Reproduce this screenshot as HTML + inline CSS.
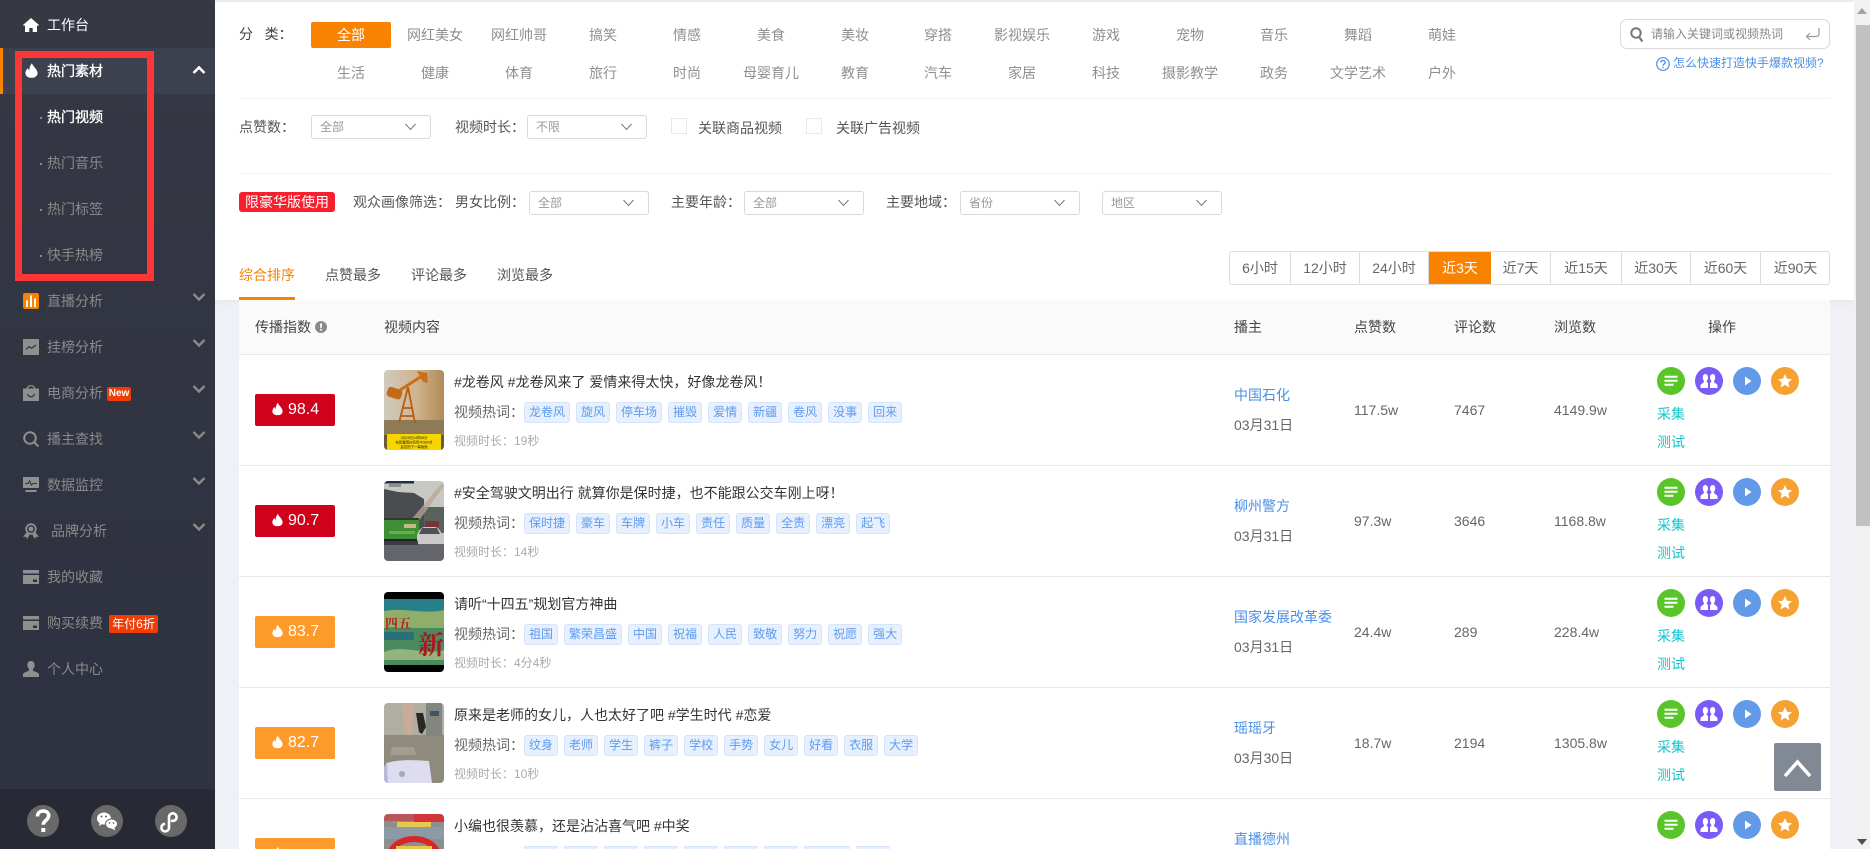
<!DOCTYPE html>
<html lang="zh-CN">
<head>
<meta charset="utf-8">
<title>热门视频</title>
<style>
*{box-sizing:border-box;margin:0;padding:0}
html,body{width:1870px;height:849px;overflow:hidden;background:#eff1f6}
body{position:relative;font:14px/20px "Liberation Sans","Noto Sans CJK SC",sans-serif;color:#666}
.a,.a>*,.r>*{position:absolute}
.t{position:absolute;white-space:nowrap;line-height:20px}
#side{position:absolute;left:0;top:0;width:215px;height:849px;background:linear-gradient(#363844,#2f3240 70%);overflow:hidden}
#side .m{position:absolute;left:0;width:215px;height:46px;color:#8a8a8a}
#side .m span.l{position:absolute;left:47px;top:13px;line-height:20px;white-space:nowrap}
#side .m span.bd{-webkit-text-stroke:.35px #fff}
#side .m svg.i{position:absolute;left:23px;top:15px;width:16px;height:16px}
#side .m svg.c{position:absolute;left:192px;top:14px;width:14px;height:10px}
#side .s span.l:before{content:"";position:absolute;left:-7px;top:10px;width:2px;height:2px;background:#8a8a8a;-webkit-text-stroke:0}
#rb{position:absolute;left:15px;top:51px;width:139px;height:230px;border:7px solid #ff3636}
#foot{position:absolute;left:0;top:789px;width:215px;height:60px;background:#272a35}
#foot div{position:absolute;top:16px;width:32px;height:32px;border-radius:50%;background:#696969}
#foot svg{position:absolute;left:0;top:0;width:32px;height:32px}
#top{position:absolute;left:215px;top:2px;width:1639px;height:298px;background:#fff;box-shadow:0 3px 5px rgba(0,0,0,.04),0 -2px 3px rgba(0,0,0,.04)}
.cat{position:absolute;width:80px;text-align:center;color:#8f8f8f;line-height:20px;white-space:nowrap}
.hr{position:absolute;left:239px;width:1591px;height:1px;background:#f2f2f2}
.sel{position:absolute;width:120px;height:24px;border:1px solid #d9d9d9;border-radius:3px;color:#999;font-size:12px;line-height:23px;padding-left:8px;background:#fff}
.sel svg{position:absolute;right:14px;top:7px;width:11px;height:8px}
.cb{position:absolute;width:16px;height:16px;border:1px solid #e8e8e8;background:#fff}
.lb{color:#555}
#hd{position:absolute;left:239px;top:300px;width:1591px;height:55px;background:#fafafa;border-bottom:1px solid #e8e8e8;color:#444}
.r{position:absolute;left:239px;width:1591px;height:111px;background:#fff;border-bottom:1px solid #e8e8e8}
.b{width:80px;height:32px;left:16px;top:39px;border-radius:2px;color:#fff;font-size:16px;line-height:32px;padding-left:33px}
.b svg{position:absolute;left:17px;top:8px;width:11px;height:14px}
.red{background:#d0021b}.or{background:#fe9a29}
.th{left:145px;top:15px;width:60px;height:80px;border-radius:4px;overflow:hidden}
.th svg{display:block;width:60px;height:80px;filter:blur(.35px)}
.tt{left:215px;top:17px;color:#333;white-space:nowrap;line-height:20px}
.hw{left:215px;top:47px;white-space:nowrap;line-height:20px;color:#666}
.tg{left:285px;top:47px;height:21px;white-space:nowrap;display:flex;gap:6px}
.tg i{font-style:normal;display:block;height:21px;line-height:19px;padding:0 4px;font-size:12px;color:#5f9bee;background:#e6f0ff;border:1px solid #d6e4fb;border-radius:3px}
.du{left:215px;top:76px;font-size:12px;color:#aaa;white-space:nowrap;line-height:20px}
.au{left:995px;top:30px;color:#4a8fe7;white-space:nowrap;line-height:20px}
.da{left:995px;top:60px;color:#666;white-space:nowrap;line-height:20px}
.n{top:45px;color:#666;line-height:20px;white-space:nowrap}
.o{top:12px;width:28px;height:28px;border-radius:50%}
.o svg{position:absolute;left:0;top:0;width:28px;height:28px}
.q{left:1418px;color:#14c4cc;line-height:20px;white-space:nowrap}
#time{position:absolute;left:1229px;top:251px;width:601px;height:34px;border:1px solid #ddd;border-radius:3px;background:#fff;overflow:hidden}
#time b{position:absolute;top:0;height:32px;font-weight:400;line-height:32px;text-align:center;color:#666;border-right:1px solid #ddd}
#time b.on{background:#f98300;color:#fff;border-right:0;height:32px;top:0;line-height:32px}
#st{position:absolute;left:1774px;top:743px;width:47px;height:48px;background:#818a94;border-radius:2px}
#sb{position:absolute;left:1854px;top:0;width:16px;height:849px;background:#f1f1f1}
#sb div{position:absolute;left:2px;top:25px;width:14px;height:501px;background:#c1c1c1}
</style>
</head>
<body>
<svg width="0" height="0" style="position:absolute">
<defs>
<symbol id="fl" viewBox="0 0 14 16"><path fill="#fff" d="M7.500 0C8 3 12.500 5.500 13.500 10C14 13.500 11 16 7 16C3 16 0 13.500.5 10C.9 8 2 6.500 3.200 5.500C3.400 6.800 3.900 7.500 4.800 8C4.500 5 5.800 2 7.500 0z"/></symbol>
<symbol id="a1" viewBox="0 0 28 28"><circle cx="14" cy="14" r="14" fill="#5ac529"/><path fill="#fff" d="M7.500 8.800h13v2h-13zM7.500 12.800h13v2h-13zM7.500 16.800h9v2h-9z"/></symbol>
<symbol id="a2" viewBox="0 0 28 28"><circle cx="14" cy="14" r="14" fill="#7b5bf7"/><path fill="#fff" d="M10 7c1.900 0 3 1.600 3 3.500 0 1.400-.6 2.700-1.400 3.500-.2 1 .6 1.500 1.400 1.900V21H5.500v-2.500c0-1.600 2.900-2.200 3.700-4.300-.9-.8-1.400-2.200-1.400-3.700C7.800 8.600 8.700 7 10 7zM18 7c1.300 0 2.200 1.600 2.200 3.500 0 1.500-.5 2.900-1.400 3.700.8 2.100 3.700 2.700 3.700 4.300V21H15v-5.100c.8-.4 1.600-.9 1.400-1.900-.8-.8-1.400-2.100-1.400-3.500C15 8.600 16.100 7 18 7z"/></symbol>
<symbol id="a3" viewBox="0 0 28 28"><circle cx="14" cy="14" r="14" fill="#639ae8"/><path fill="#fff" d="M12 9.500l6.500 4.500-6.500 4.500z"/></symbol>
<symbol id="a4" viewBox="0 0 28 28"><circle cx="14" cy="14" r="14" fill="#f5a232"/><path fill="#fff" d="M14 7l2.100 4.700 5 .5-3.800 3.300 1.100 5-4.400-2.600-4.400 2.600 1.100-5-3.800-3.300 5-.5z"/></symbol>
<symbol id="dn" viewBox="0 0 14 10"><path fill="none" stroke="#8a8a8a" stroke-width="2.400" d="M1.500 2L7 7.500 12.500 2"/></symbol>
<symbol id="sd" viewBox="0 0 11 8"><path fill="none" stroke="#777" stroke-width="1" d="M.5 1L5.500 6.500 10.500 1"/></symbol>
<symbol id="card" viewBox="0 0 16 16"><path fill="#8f8f8f" d="M0 1h16v3.500H0zM0 6h16v9H0z"/><path fill="#2f3240" d="M10 10.500h4V13h-4z"/></symbol>
</defs>
</svg>

<div id="side">
  <div class="m" style="top:2px;color:#fff"><svg class="i" viewBox="0 0 16 16"><path fill="#fff" d="M8 1l8 7-1 1-1-.8V15H9.700v-4H6.300v4H2V8.200L1 9 0 8z"/></svg><span class="l">工作台</span></div>
  <div class="m" style="top:48px;background:#3d404d;color:#fff"><div style="position:absolute;left:0;top:0;width:3px;height:46px;background:#f98300"></div><svg class="i" viewBox="0 0 14 16" style="left:25px;width:13px;height:15px"><use href="#fl"/></svg><span class="l bd">热门素材</span><svg class="c" viewBox="0 0 14 10" style="top:17px"><path fill="none" stroke="#fff" stroke-width="2.600" d="M1.500 8L7 2.500 12.500 8"/></svg></div>
  <div class="m s" style="top:94px;color:#fff"><span class="l bd">热门视频</span></div>
  <div class="m s" style="top:140px"><span class="l">热门音乐</span></div>
  <div class="m s" style="top:186px"><span class="l">热门标签</span></div>
  <div class="m s" style="top:232px"><span class="l">快手热榜</span></div>
  <div class="m" style="top:278px"><svg class="i" viewBox="0 0 16 16"><rect width="16" height="16" rx="2" fill="#f98300"/><path fill="#fff" d="M3 7.500h2V14H3zM7 2.500h2V14H7zM11 5.500h2V14h-2z"/></svg><span class="l">直播分析</span><svg class="c" viewBox="0 0 14 10"><use href="#dn"/></svg></div>
  <div class="m" style="top:324px"><svg class="i" viewBox="0 0 16 16"><rect width="16" height="16" fill="#8f8f8f"/><path fill="none" stroke="#2f3240" stroke-width="1.200" d="M3 10.500l3-3 2.500 1.800L13 6"/></svg><span class="l">挂榜分析</span><svg class="c" viewBox="0 0 14 10"><use href="#dn"/></svg></div>
  <div class="m" style="top:370px"><svg class="i" viewBox="0 0 16 16"><path fill="#8f8f8f" d="M0 3.500h3.500C4 1.500 5.500 0 8 0s4 1.500 4.500 3.500H16V16H0zM5 3.500h6C10.600 2.200 9.500 1.300 8 1.300S5.400 2.200 5 3.500z"/><path fill="none" stroke="#2f3240" stroke-width="1.200" d="M4.500 9c.8 2 2 2.800 3.500 2.800S10.700 11 11.500 9"/></svg><span class="l">电商分析</span><div style="position:absolute;left:107px;top:17px;width:24px;height:14px;background:#f03c05;border-radius:2px;color:#fff;font-size:10px;font-weight:700;line-height:14px;text-align:center">New</div><svg class="c" viewBox="0 0 14 10"><use href="#dn"/></svg></div>
  <div class="m" style="top:416px"><svg class="i" viewBox="0 0 16 16"><circle cx="7" cy="7" r="5.800" fill="none" stroke="#8f8f8f" stroke-width="2"/><path stroke="#8f8f8f" stroke-width="2" d="M11 11l4.500 4.500"/></svg><span class="l">播主查找</span><svg class="c" viewBox="0 0 14 10"><use href="#dn"/></svg></div>
  <div class="m" style="top:462px"><svg class="i" viewBox="0 0 16 16"><path fill="#8f8f8f" d="M0 0h16v11H0zM2.500 13h11v2h-11z"/><path fill="none" stroke="#2f3240" stroke-width="1.100" d="M2 6.500h3l1.500-2.500 2 4 1.500-1.500h4"/></svg><span class="l">数据监控</span><svg class="c" viewBox="0 0 14 10"><use href="#dn"/></svg></div>
  <div class="m" style="top:508px"><svg class="i" viewBox="0 0 16 16"><circle cx="8" cy="6" r="4.800" fill="none" stroke="#8f8f8f" stroke-width="1.800"/><circle cx="8" cy="6" r="2.400" fill="#8f8f8f"/><path fill="#8f8f8f" d="M3.500 9.500L0 14l3-.3L4 16l2.500-4zM12.500 9.500L16 14l-3-.3L12 16l-2.500-4z"/></svg><span class="l" style="left:51px">品牌分析</span><svg class="c" viewBox="0 0 14 10"><use href="#dn"/></svg></div>
  <div class="m" style="top:554px"><svg class="i" viewBox="0 0 16 16"><use href="#card"/></svg><span class="l">我的收藏</span></div>
  <div class="m" style="top:600px"><svg class="i" viewBox="0 0 16 16"><use href="#card"/></svg><span class="l">购买续费</span><div style="position:absolute;left:109px;top:15px;width:49px;height:18px;background:#f03c05;border-radius:2px;color:#fff;font-size:12px;line-height:18px;text-align:center;white-space:nowrap">年付6折</div></div>
  <div class="m" style="top:646px"><svg class="i" viewBox="0 0 16 16"><path fill="#8f8f8f" d="M8 0c2.300 0 3.700 1.700 3.700 4 0 1.700-.8 3.300-1.800 4.200-.3 1.200.5 1.700 2.900 2.700 1.600.7 3.200 1.300 3.200 2.600V16H0v-2.500c0-1.300 1.600-1.900 3.200-2.600 2.400-1 3.200-1.500 2.900-2.700C5.100 7.300 4.300 5.700 4.300 4 4.300 1.700 5.700 0 8 0z"/></svg><span class="l">个人中心</span></div>
  <div id="rb"></div>
  <div id="foot">
    <div style="left:27px"><svg viewBox="0 0 32 32"><path fill="none" stroke="#fff" stroke-width="3.600" d="M10.500 11.500c0-3.400 2.300-5.500 5.700-5.500 3.300 0 5.500 2 5.500 4.800 0 4.400-5.400 4.400-5.400 9"/><rect x="14.300" y="23" width="4" height="4" fill="#fff"/></svg></div>
    <div style="left:91px"><svg viewBox="0 0 32 32"><ellipse cx="13" cy="13.500" rx="7" ry="6" fill="#fff"/><path fill="#fff" d="M9 17l-1 4 4-2.500z"/><ellipse cx="20.500" cy="19" rx="6" ry="5" fill="#fff" stroke="#696969" stroke-width="1"/><path fill="#fff" d="M23 22.500l1.500 3-4-2z"/><circle cx="10.500" cy="11.500" r="1" fill="#696969"/><circle cx="15" cy="11.500" r="1" fill="#696969"/><circle cx="18.500" cy="18" r=".9" fill="#696969"/><circle cx="22.500" cy="18" r=".9" fill="#696969"/></svg></div>
    <div style="left:155px"><svg viewBox="0 0 32 32"><path fill="none" stroke="#fff" stroke-width="2.600" stroke-linecap="round" d="M9 19a3.800 3.800 0 1 0 5 3.800V12a3.800 3.800 0 1 1 6 3.300c-1 .6-2 .7-3 .5"/></svg></div>
  </div>
</div>

<div id="top"></div>

<div class="t" style="left:239px;top:24px;color:#444">分&nbsp;&nbsp;&nbsp;类：</div>
<div class="cat" style="left:311px;top:22px;height:26px;line-height:26px;background:#f98300;color:#fff;border-radius:2px">全部</div>
<div class="cat" style="left:395px;top:25px">网红美女</div>
<div class="cat" style="left:479px;top:25px">网红帅哥</div>
<div class="cat" style="left:563px;top:25px">搞笑</div>
<div class="cat" style="left:647px;top:25px">情感</div>
<div class="cat" style="left:731px;top:25px">美食</div>
<div class="cat" style="left:815px;top:25px">美妆</div>
<div class="cat" style="left:898px;top:25px">穿搭</div>
<div class="cat" style="left:982px;top:25px">影视娱乐</div>
<div class="cat" style="left:1066px;top:25px">游戏</div>
<div class="cat" style="left:1150px;top:25px">宠物</div>
<div class="cat" style="left:1234px;top:25px">音乐</div>
<div class="cat" style="left:1318px;top:25px">舞蹈</div>
<div class="cat" style="left:1402px;top:25px">萌娃</div>
<div class="cat" style="left:311px;top:63px">生活</div>
<div class="cat" style="left:395px;top:63px">健康</div>
<div class="cat" style="left:479px;top:63px">体育</div>
<div class="cat" style="left:563px;top:63px">旅行</div>
<div class="cat" style="left:647px;top:63px">时尚</div>
<div class="cat" style="left:731px;top:63px">母婴育儿</div>
<div class="cat" style="left:815px;top:63px">教育</div>
<div class="cat" style="left:898px;top:63px">汽车</div>
<div class="cat" style="left:982px;top:63px">家居</div>
<div class="cat" style="left:1066px;top:63px">科技</div>
<div class="cat" style="left:1150px;top:63px">摄影教学</div>
<div class="cat" style="left:1234px;top:63px">政务</div>
<div class="cat" style="left:1318px;top:63px">文学艺术</div>
<div class="cat" style="left:1402px;top:63px">户外</div>

<div style="position:absolute;left:1620px;top:19px;width:210px;height:30px;border:1px solid #d9d9d9;border-radius:7px;background:#fff"></div>
<svg style="position:absolute;left:1630px;top:27px;width:14px;height:15px" viewBox="0 0 14 15"><circle cx="6" cy="6" r="4.700" fill="none" stroke="#777" stroke-width="2"/><path stroke="#777" stroke-width="2.200" d="M9 10l3.500 4.500"/></svg>
<div class="t" style="left:1651px;top:24px;font-size:12px;color:#888">请输入关键词或视频热词</div>
<svg style="position:absolute;left:1805px;top:28px;width:15px;height:13px" viewBox="0 0 15 13"><path fill="none" stroke="#999" stroke-width="1.200" d="M14 0v5.500c0 2-1 3-3 3H2M5 5L1.500 8.500 5 12"/></svg>
<svg style="position:absolute;left:1656px;top:57px;width:14px;height:14px" viewBox="0 0 14 14"><circle cx="7" cy="7" r="6.300" fill="none" stroke="#4a8fe7" stroke-width="1.200"/><path fill="none" stroke="#4a8fe7" stroke-width="1.300" d="M4.800 5.500C4.800 4.200 5.800 3.500 7 3.500s2.200.7 2.200 1.900C9.200 7 7 7 7 8.800"/><rect x="6.300" y="9.700" width="1.400" height="1.400" fill="#4a8fe7"/></svg>
<div class="t" style="left:1673px;top:53px;font-size:12px;color:#4a8fe7">怎么快速打造快手爆款视频?</div>

<div class="hr" style="top:98px"></div>
<div class="hr" style="top:173px"></div>

<div class="t lb" style="left:239px;top:117px">点赞数：</div>
<div class="sel" style="left:311px;top:115px">全部<svg viewBox="0 0 11 8"><use href="#sd"/></svg></div>
<div class="t lb" style="left:455px;top:117px">视频时长：</div>
<div class="sel" style="left:527px;top:115px">不限<svg viewBox="0 0 11 8"><use href="#sd"/></svg></div>
<div class="cb" style="left:671px;top:118px"></div>
<div class="t lb" style="left:698px;top:118px">关联商品视频</div>
<div class="cb" style="left:806px;top:118px"></div>
<div class="t lb" style="left:836px;top:118px">关联广告视频</div>

<div style="position:absolute;left:239px;top:192px;width:96px;height:20px;background:#f8202f;color:#fff;border-radius:3px;line-height:20px;text-align:center;white-space:nowrap">限豪华版使用</div>
<div class="t lb" style="left:353px;top:192px">观众画像筛选：</div>
<div class="t lb" style="left:455px;top:192px">男女比例：</div>
<div class="sel" style="left:529px;top:191px">全部<svg viewBox="0 0 11 8"><use href="#sd"/></svg></div>
<div class="t lb" style="left:671px;top:192px">主要年龄：</div>
<div class="sel" style="left:744px;top:191px">全部<svg viewBox="0 0 11 8"><use href="#sd"/></svg></div>
<div class="t lb" style="left:886px;top:192px">主要地域：</div>
<div class="sel" style="left:960px;top:191px">省份<svg viewBox="0 0 11 8"><use href="#sd"/></svg></div>
<div class="sel" style="left:1102px;top:191px">地区<svg viewBox="0 0 11 8"><use href="#sd"/></svg></div>

<div class="t" style="left:239px;top:265px;color:#f98300">综合排序</div>
<div style="position:absolute;left:239px;top:297px;width:56px;height:3px;background:#f98300"></div>
<div class="t lb" style="left:325px;top:265px">点赞最多</div>
<div class="t lb" style="left:411px;top:265px">评论最多</div>
<div class="t lb" style="left:497px;top:265px">浏览最多</div>

<div id="time">
  <b style="left:0;width:61px">6小时</b>
  <b style="left:61px;width:69px">12小时</b>
  <b style="left:130px;width:69px">24小时</b>
  <b class="on" style="left:199px;width:62px">近3天</b>
  <b style="left:261px;width:60px">近7天</b>
  <b style="left:321px;width:71px">近15天</b>
  <b style="left:392px;width:69px">近30天</b>
  <b style="left:461px;width:70px">近60天</b>
  <b style="left:531px;width:69px;border-right:0">近90天</b>
</div>

<div id="hd">
  <div class="t" style="left:16px;top:17px">传播指数</div>
  <svg style="position:absolute;left:76px;top:21px;width:12px;height:12px" viewBox="0 0 12 12"><circle cx="6" cy="6" r="6" fill="#8a8a8a"/><path fill="#fff" d="M5 2.500h2L6.700 7.200H5.300zM5.200 8h1.600v1.600H5.200z"/></svg>
  <div class="t" style="left:145px;top:17px">视频内容</div>
  <div class="t" style="left:995px;top:17px">播主</div>
  <div class="t" style="left:1115px;top:17px">点赞数</div>
  <div class="t" style="left:1215px;top:17px">评论数</div>
  <div class="t" style="left:1315px;top:17px">浏览数</div>
  <div class="t" style="left:1469px;top:17px">操作</div>
</div>

<!-- row 1 -->
<div class="r" style="top:355px">
  <div class="b red"><svg viewBox="0 0 14 16"><use href="#fl"/></svg>98.4</div>
  <div class="th"><svg viewBox="0 0 60 80"><defs><linearGradient id="g1" x1="0" x2="1" y1="0" y2="0"><stop offset="0" stop-color="#cfcbbf"/><stop offset=".55" stop-color="#d0b38c"/><stop offset="1" stop-color="#b08a58"/></linearGradient></defs><rect width="60" height="80" fill="url(#g1)"/><rect y="50" width="60" height="15" fill="#8f7a58"/><rect y="65" width="60" height="15" fill="#6b5a3a"/><path fill="none" stroke="#c9701a" stroke-width="3" d="M10 24L38 6"/><path fill="none" stroke="#b35f14" stroke-width="1.800" d="M24 17L15 53M24 17L31 53M19 38h9M17 46h12"/><rect x="3" y="18" width="15" height="10" fill="#c26a18" rx="3" transform="rotate(18 10 23)"/><path fill="#c9701a" d="M33 1l10 2 1 10-5-1z"/><rect x="3" y="64" width="54" height="16" fill="#f7d600"/><text x="30" y="69" font-size="3.400" text-anchor="middle" fill="#222" font-family="Liberation Sans,Noto Sans CJK SC,sans-serif">3月25日14时58分</text><text x="30" y="73.500" font-size="3.400" text-anchor="middle" fill="#222" font-family="Liberation Sans,Noto Sans CJK SC,sans-serif">在新疆博州风场TK809井</text><text x="30" y="78" font-size="3.400" text-anchor="middle" fill="#222" font-family="Liberation Sans,Noto Sans CJK SC,sans-serif">监控拍下一幕画面</text></svg></div>
  <div class="tt">#龙卷风 #龙卷风来了 爱情来得太快，好像龙卷风！</div>
  <div class="hw">视频热词：</div>
  <div class="tg"><i>龙卷风</i><i>旋风</i><i>停车场</i><i>摧毁</i><i>爱情</i><i>新疆</i><i>卷风</i><i>没事</i><i>回来</i></div>
  <div class="du">视频时长：19秒</div>
  <div class="au">中国石化</div><div class="da">03月31日</div>
  <div class="n" style="left:1115px">117.5w</div><div class="n" style="left:1215px">7467</div><div class="n" style="left:1315px">4149.9w</div>
  <div class="o" style="left:1418px"><svg><use href="#a1"/></svg></div><div class="o" style="left:1456px"><svg><use href="#a2"/></svg></div><div class="o" style="left:1494px"><svg><use href="#a3"/></svg></div><div class="o" style="left:1532px"><svg><use href="#a4"/></svg></div>
  <div class="q" style="top:49px">采集</div><div class="q" style="top:77px">测试</div>
</div>

<!-- row 2 -->
<div class="r" style="top:466px">
  <div class="b red"><svg viewBox="0 0 14 16"><use href="#fl"/></svg>90.7</div>
  <div class="th"><svg viewBox="0 0 60 80"><rect width="60" height="80" fill="#c9c7c2"/><rect width="30" height="2.500" fill="#1f3040"/><rect x="5" y="3" width="12" height="3" fill="#8a8f92"/><path fill="#4a4d50" d="M0 8L14 11 30 12 40 18 40 50H0z"/><path fill="#58635c" d="M40 26h20v26H40z"/><path fill="#b9a695" opacity=".75" d="M16 52L58 2l2 3-34 47z"/><rect x="0" y="37" width="35" height="21" fill="#3f8e35"/><rect x="0" y="37" width="35" height="2" fill="#2f3a34"/><rect x="20" y="43" width="12" height="4" fill="#c9b98a"/><rect x="5" y="50" width="26" height="3" fill="#5cb347"/><rect y="58" width="36" height="4" fill="#1e2224"/><rect x="41" y="40" width="14" height="6" fill="#7a3338" rx="1"/><path fill="#c9c9c9" d="M33 54c2-6 5-8 8-8h9c3 0 6 2 8 8v9H33z"/><path fill="#4d5156" d="M38 47h15l3 6H35z"/><rect y="63" width="60" height="17" fill="#63656a"/><path fill="#3a3c40" d="M0 60h34v4H0z"/></svg></div>
  <div class="tt">#安全驾驶文明出行 就算你是保时捷，也不能跟公交车刚上呀！</div>
  <div class="hw">视频热词：</div>
  <div class="tg"><i>保时捷</i><i>豪车</i><i>车牌</i><i>小车</i><i>责任</i><i>质量</i><i>全责</i><i>漂亮</i><i>起飞</i></div>
  <div class="du">视频时长：14秒</div>
  <div class="au">柳州警方</div><div class="da">03月31日</div>
  <div class="n" style="left:1115px">97.3w</div><div class="n" style="left:1215px">3646</div><div class="n" style="left:1315px">1168.8w</div>
  <div class="o" style="left:1418px"><svg><use href="#a1"/></svg></div><div class="o" style="left:1456px"><svg><use href="#a2"/></svg></div><div class="o" style="left:1494px"><svg><use href="#a3"/></svg></div><div class="o" style="left:1532px"><svg><use href="#a4"/></svg></div>
  <div class="q" style="top:49px">采集</div><div class="q" style="top:77px">测试</div>
</div>

<!-- row 3 -->
<div class="r" style="top:577px">
  <div class="b or"><svg viewBox="0 0 14 16"><use href="#fl"/></svg>83.7</div>
  <div class="th"><svg viewBox="0 0 60 80"><rect width="60" height="80" fill="#000"/><rect y="7" width="60" height="66" fill="#3d8a78"/><path fill="#26808a" d="M0 7h60v12H0z"/><path fill="#8fae6a" d="M0 19C20 15 40 23 60 18V36H0z"/><path fill="#4a8a5e" d="M0 36h60v37H0z"/><path fill="#93b57c" d="M0 60C20 52 40 64 60 58V68H0z"/><path fill="#2a7078" d="M0 40h30v8H0z"/><text x="1" y="36" font-size="13" font-weight="700" fill="#b81c22" font-family="Noto Serif CJK SC,serif">四五</text><text x="34" y="62" font-size="26" font-weight="700" fill="#ab151c" font-family="Noto Serif CJK SC,serif">新</text></svg></div>
  <div class="tt">请听“十四五”规划官方神曲</div>
  <div class="hw">视频热词：</div>
  <div class="tg"><i>祖国</i><i>繁荣昌盛</i><i>中国</i><i>祝福</i><i>人民</i><i>致敬</i><i>努力</i><i>祝愿</i><i>强大</i></div>
  <div class="du">视频时长：4分4秒</div>
  <div class="au">国家发展改革委</div><div class="da">03月31日</div>
  <div class="n" style="left:1115px">24.4w</div><div class="n" style="left:1215px">289</div><div class="n" style="left:1315px">228.4w</div>
  <div class="o" style="left:1418px"><svg><use href="#a1"/></svg></div><div class="o" style="left:1456px"><svg><use href="#a2"/></svg></div><div class="o" style="left:1494px"><svg><use href="#a3"/></svg></div><div class="o" style="left:1532px"><svg><use href="#a4"/></svg></div>
  <div class="q" style="top:49px">采集</div><div class="q" style="top:77px">测试</div>
</div>

<!-- row 4 -->
<div class="r" style="top:688px">
  <div class="b or"><svg viewBox="0 0 14 16"><use href="#fl"/></svg>82.7</div>
  <div class="th"><svg viewBox="0 0 60 80"><rect width="60" height="80" fill="#8e8a7c"/><rect width="60" height="32" fill="#b0ada2"/><rect x="42" width="16" height="33" fill="#83857f"/><rect x="46" y="8" width="9" height="5" fill="#3e5563"/><path fill="#c9ac98" d="M18 0h12l-2 32h-7z"/><path fill="#2a2827" d="M32 10h7l3 14-4 7-3-2z"/><path fill="#a19d90" d="M8 44h22l2 8H6z"/><path fill="#dedcf0" d="M3 60c12-4 30-3 42-2l3 22H0z"/><path fill="#b9b7dc" d="M0 64l3-5 1 21H0z"/><rect x="48" y="58" width="12" height="22" fill="#8e8a7c"/><circle cx="18" cy="71" r="3" fill="#a7a7b5"/></svg></div>
  <div class="tt">原来是老师的女儿，人也太好了吧 #学生时代 #恋爱</div>
  <div class="hw">视频热词：</div>
  <div class="tg"><i>纹身</i><i>老师</i><i>学生</i><i>裤子</i><i>学校</i><i>手势</i><i>女儿</i><i>好看</i><i>衣服</i><i>大学</i></div>
  <div class="du">视频时长：10秒</div>
  <div class="au">瑶瑶牙</div><div class="da">03月30日</div>
  <div class="n" style="left:1115px">18.7w</div><div class="n" style="left:1215px">2194</div><div class="n" style="left:1315px">1305.8w</div>
  <div class="o" style="left:1418px"><svg><use href="#a1"/></svg></div><div class="o" style="left:1456px"><svg><use href="#a2"/></svg></div><div class="o" style="left:1494px"><svg><use href="#a3"/></svg></div><div class="o" style="left:1532px"><svg><use href="#a4"/></svg></div>
  <div class="q" style="top:49px">采集</div><div class="q" style="top:77px">测试</div>
</div>

<!-- row 5 (cut off by the frame: every box ends at y=849) -->
<div class="r" style="top:799px;height:50px;overflow:hidden;border-bottom:0">
  <div class="b or" style="height:11px;overflow:hidden"><svg viewBox="0 0 11 3" style="height:3px"><use href="#fl" width="11" height="14"/></svg></div>
  <div class="th" style="height:35px;border-radius:4px 4px 0 0"><svg viewBox="0 0 60 35" style="height:35px"><rect width="60" height="35" fill="#8f8e8e"/><path fill="#b9565a" d="M0 0h60v7H0z"/><path fill="#d2343a" d="M30 0h30v8H30z"/><rect x="13" y="8" width="34" height="5" fill="#e6c84f"/><rect y="13" width="60" height="12" fill="#8c9aa6"/><path fill="none" stroke="#d8252a" stroke-width="6" d="M6 40C12 20 48 20 54 40"/><rect x="12" y="32" width="36" height="3" fill="#e6c84f"/></svg></div>
  <div class="tt">小编也很羡慕，还是沾沾喜气吧 #中奖</div>
  <div class="tg" style="height:3px;overflow:hidden"><i style="width:34px;height:3px;border-bottom:0"></i><i style="width:34px;height:3px;border-bottom:0"></i><i style="width:34px;height:3px;border-bottom:0"></i><i style="width:34px;height:3px;border-bottom:0"></i><i style="width:34px;height:3px;border-bottom:0"></i><i style="width:34px;height:3px;border-bottom:0"></i><i style="width:34px;height:3px;border-bottom:0"></i><i style="width:46px;height:3px;border-bottom:0"></i><i style="width:34px;height:3px;border-bottom:0"></i></div>
  <div class="au">直播德州</div>
  <div class="o" style="left:1418px"><svg><use href="#a1"/></svg></div><div class="o" style="left:1456px"><svg><use href="#a2"/></svg></div><div class="o" style="left:1494px"><svg><use href="#a3"/></svg></div><div class="o" style="left:1532px"><svg><use href="#a4"/></svg></div>
</div>

<div id="st"><svg style="position:absolute;left:9px;top:15px;width:29px;height:20px" viewBox="0 0 29 20"><path fill="none" stroke="#fff" stroke-width="3.500" d="M2 18L14.500 4 27 18"/></svg></div>

<div id="sb"><div></div>
  <svg style="position:absolute;left:3px;top:8px;width:10px;height:6px" viewBox="0 0 10 6"><path fill="#a3a3a3" d="M5 0l5 6H0z"/></svg>
  <svg style="position:absolute;left:3px;top:839px;width:10px;height:6px" viewBox="0 0 10 6"><path fill="#505050" d="M5 6L0 0h10z"/></svg>
</div>
</body>
</html>
